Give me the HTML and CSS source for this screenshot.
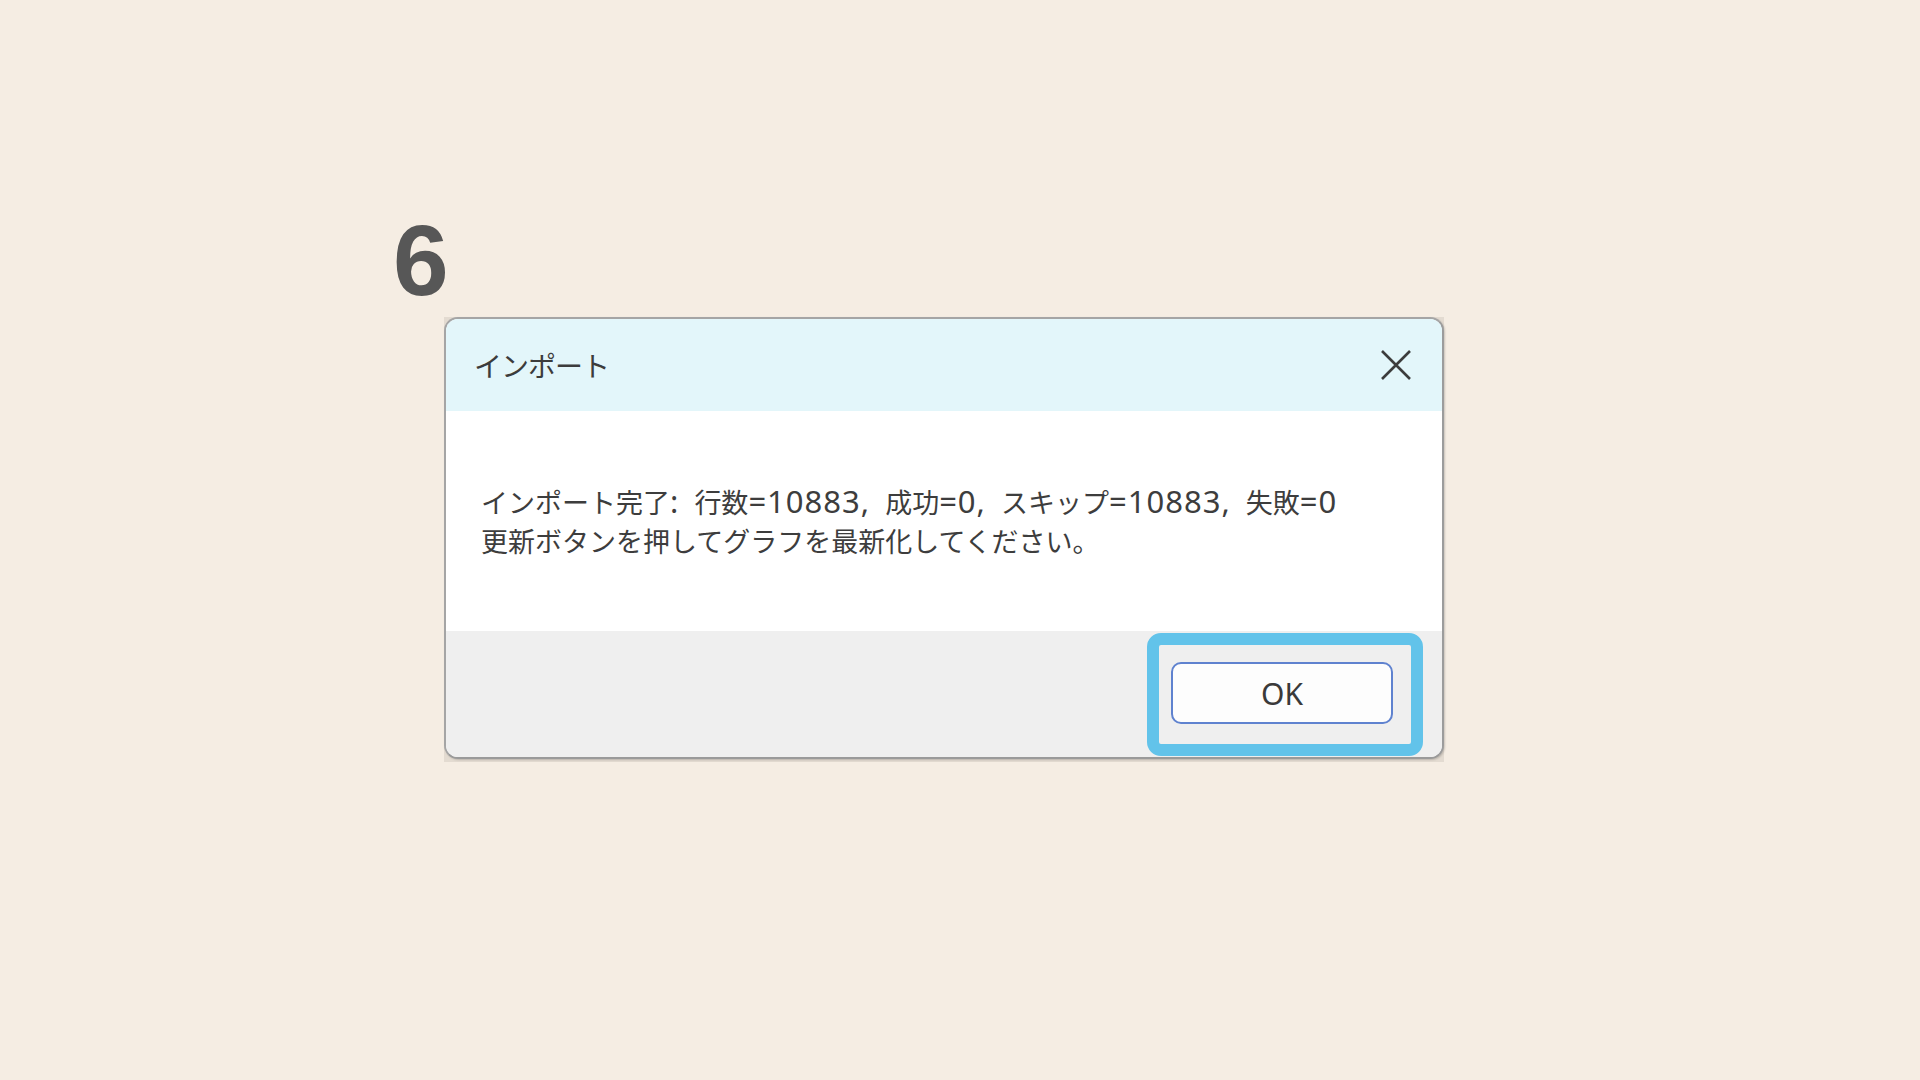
FILE: index.html
```html
<!DOCTYPE html>
<html lang="ja">
<head>
  <meta charset="UTF-8">
  <title>手順 6 - インポート完了</title>
  <link rel="stylesheet" href="styles.css">
</head>
<body>
  <div class="step">
    <div class="step-num">6</div>

    <!-- ダイアログのスクリーンショット -->
    <div class="shot">
      <div class="dialog">
        <div class="dialog-title">
          <span class="title-text">インポート</span>
          <svg class="close-icon" width="32" height="32" viewBox="0 0 32 32">
            <path d="M2 2 L30 30 M30 2 L2 30" stroke="#3c3c3c" stroke-width="2.6" fill="none"/>
          </svg>
        </div>
        <div class="dialog-body">
          <p>インポート完了<span class="lat">: </span>行数<span class="lat">=10883, </span>成功<span class="lat">=0, </span>スキップ<span class="lat">=10883, </span>失敗<span class="lat">=0</span></p>
          <p>更新ボタンを押してグラフを最新化してください。</p>
        </div>
        <div class="dialog-footer">
          <div class="highlight">
            <button class="btn-ok">OK</button>
          </div>
        </div>
      </div>
    </div>
  </div>
</body>
</html>
```

FILE: styles.css
```css
/* ベース */
* { margin: 0; padding: 0; box-sizing: border-box; }
body { background: #f5ede3; font-family: "Noto Sans CJK JP", "Noto Sans", sans-serif; color: #3a3a3a; }

.step { padding: 210px 0 0 393px; }
.step-num { font-family: "Liberation Sans", Arial, sans-serif; font-weight: bold; font-size: 100px; line-height: 100px; color: #575757; height: 107px; }

/* スクリーンショット枠 */
.shot { width: 1000px; height: 445px; margin-left: 51px; background: #e3dbd1; }
.dialog { height: 442px; border: 2px solid #a5a5a5; border-right-color: #9c9c9c; border-bottom-color: #9a9a9a; border-radius: 14px; overflow: hidden; display: flex; flex-direction: column; background: #fff; box-shadow: 1px 1px 2px rgba(0,0,0,0.18); }

.dialog-title { height: 92px; background: #e3f6fa; display: flex; align-items: center; justify-content: space-between; padding: 0 30px 0 28px; }
.title-text { font-size: 28px; letter-spacing: -1px; color: #3c3c3c; }
.close-icon { display: block; }

.dialog-body { height: 220px; background: #fff; display: flex; flex-direction: column; justify-content: center; padding-left: 35px; font-size: 27px; line-height: 39px; color: #3d3d3d; }
.dialog-body .lat { font-family: "Noto Sans", sans-serif; font-size: 31px; letter-spacing: 1px; word-spacing: 6px; line-height: 1; }

.dialog-footer { flex: 1; background: #efefef; display: flex; justify-content: flex-end; align-items: flex-start; padding: 2px 19px 0 0; }
.highlight { border: 12px solid #62c3ea; border-radius: 14px; padding: 17px 18px 20px 12px; }
.btn-ok { width: 222px; height: 62px; background: #fdfdfd; border: 2px solid #5f82cf; border-radius: 10px; font-family: "Noto Sans", sans-serif; font-size: 30px; color: #3a3a3a; display: block; }
```
